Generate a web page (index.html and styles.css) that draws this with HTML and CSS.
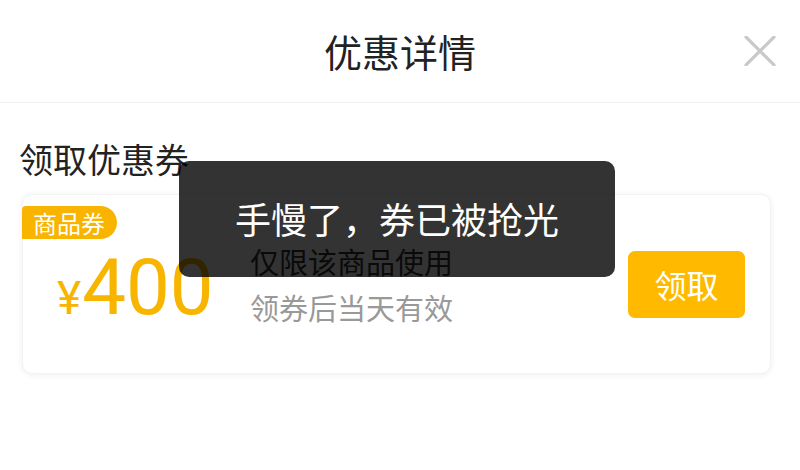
FILE: index.html
```html
<!DOCTYPE html>
<html lang="zh-CN">
<head>
<meta charset="utf-8">
<title>优惠详情</title>
<link rel="stylesheet" href="styles.css">
</head>
<body>
<div class="page">
  <header class="header">
    <div class="spacer"></div>
    <h1 class="title">优惠详情</h1>
    <div class="close-wrap">
      <svg class="close" width="32" height="30" viewBox="0 0 32 30">
        <path d="M2 1 L30 29 M30 1 L2 29" stroke="#c9c9c9" stroke-width="3.2" fill="none" stroke-linecap="round"/>
      </svg>
    </div>
  </header>
  <section class="section">
    <h2 class="heading">领取优惠券</h2>
    <div class="card">
      <span class="badge">商品券</span>
      <div class="price"><span class="yen">¥</span><span class="amount">400</span></div>
      <div class="info">
        <div class="line1">仅限该商品使用</div>
        <div class="line2">领券后当天有效</div>
      </div>
      <button class="btn">领取</button>
    </div>
  </section>
  <div class="toast">手慢了，券已被抢光</div>
</div>
</body>
</html>
```

FILE: styles.css
```css
html, body {
  margin: 0;
  padding: 0;
  background: #fff;
}
body {
  font-family: "Noto Sans CJK SC", "Noto Sans", sans-serif;
  color: #222;
}
.page {
  position: relative;
  width: 800px;
  height: 470px;
  overflow: hidden;
}
.header {
  height: 103px;
  border-bottom: 1px solid #efefef;
  display: flex;
  align-items: center;
  padding: 0 24px 0 24px;
  box-sizing: border-box;
}
.spacer, .close-wrap {
  width: 60px;
  display: flex;
  justify-content: flex-end;
}
.title {
  flex: 1;
  margin: 0;
  text-align: center;
  font-size: 38px;
  font-weight: 400;
  color: #222;
  line-height: 50px;
}
.close {
  display: block;
}
.section {
  padding: 0 29px 0 22px;
}
.heading {
  margin: 36px 0 15px -3px;
  font-size: 34px;
  font-weight: 400;
  line-height: 40px;
  color: #222;
}
.card {
  position: relative;
  height: 180px;
  border-radius: 10px;
  background: #fff;
  box-shadow: 0 1px 6px rgba(0,0,0,0.07);
  border: 1px solid #f3f3f3;
  box-sizing: border-box;
  display: flex;
  align-items: center;
  padding: 0 25px 0 34px;
}
.badge {
  position: absolute;
  left: -1px;
  top: 11px;
  height: 33px;
  line-height: 33px;
  padding: 0 12px 0 11px;
  background: #f9b400;
  color: #fff;
  font-size: 24px;
  border-radius: 4px 17px 17px 0;
}
.price {
  color: #f8b500;
  font-family: Roboto, "Noto Sans", sans-serif;
  width: 193px;
  margin-top: 6px;
  white-space: nowrap;
}
.yen {
  font-size: 46px;
}
.amount {
  font-size: 78px;
  margin-left: 1px;
}
.info {
  flex: 1;
  font-size: 29px;
  line-height: 46px;
}
.line1 {
  color: #333;
}
.line2 {
  color: #999;
}
.btn {
  width: 117px;
  height: 67px;
  border: none;
  border-radius: 7px;
  background: #ffba00;
  color: #fff;
  font-family: "Noto Sans CJK SC", sans-serif;
  font-size: 32px;
  padding: 0;
}
.toast {
  position: absolute;
  left: 179px;
  top: 161px;
  width: 436px;
  height: 116px;
  border-radius: 10px;
  background: rgba(0,0,0,0.8);
  color: #fff;
  font-size: 36px;
  display: flex;
  align-items: center;
  justify-content: center;
  padding-bottom: 2px;
  box-sizing: border-box;
}
```
